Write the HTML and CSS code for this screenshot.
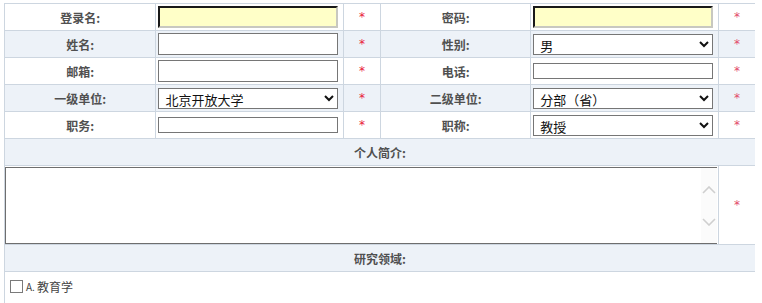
FILE: index.html
```html
<!DOCTYPE html>
<html lang="zh-CN">
<head>
  <meta charset="UTF-8" />
  <title>用户注册</title>
  <link rel="stylesheet" href="styles.css">
</head>
<body>
  <table class="form-table">
    <colgroup>
      <col class="c-label"><col class="c-field"><col class="c-star">
      <col class="c-label2"><col class="c-field"><col class="c-star">
    </colgroup>
    <tr>
      <th>登录名:</th>
      <td class="field"><input class="txt hl" type="text"></td>
      <td class="star">*</td>
      <th>密码:</th>
      <td class="field"><input class="txt hl" type="password"></td>
      <td class="star soft">*</td>
    </tr>
    <tr class="alt">
      <th>姓名:</th>
      <td class="field"><input class="txt" type="text"></td>
      <td class="star">*</td>
      <th>性别:</th>
      <td class="field"><select class="sel"><option>男</option><option>女</option></select></td>
      <td class="star soft">*</td>
    </tr>
    <tr>
      <th>邮箱:</th>
      <td class="field"><input class="txt" type="text"></td>
      <td class="star">*</td>
      <th>电话:</th>
      <td class="field"><input class="txt small" type="text"></td>
      <td class="star soft">*</td>
    </tr>
    <tr class="alt">
      <th>一级单位:</th>
      <td class="field"><select class="sel"><option>北京开放大学</option></select></td>
      <td class="star">*</td>
      <th>二级单位:</th>
      <td class="field"><select class="sel"><option>分部（省）</option></select></td>
      <td class="star soft">*</td>
    </tr>
    <tr>
      <th>职务:</th>
      <td class="field"><input class="txt small" type="text"></td>
      <td class="star">*</td>
      <th>职称:</th>
      <td class="field"><select class="sel"><option>教授</option><option>副教授</option></select></td>
      <td class="star soft">*</td>
    </tr>
    <tr class="alt">
      <th colspan="6">个人简介:</th>
    </tr>
    <tr class="intro">
      <td colspan="5" class="area-cell">
        <div class="area-wrap">
          <textarea class="area"></textarea>
          <div class="scroll-arrows">
            <svg width="14" height="8" viewBox="0 0 14 8"><path d="M1 7 L7 1 L13 7" fill="none" stroke="#cfcfcf" stroke-width="1.6"/></svg>
            <svg width="14" height="8" viewBox="0 0 14 8"><path d="M1 1 L7 7 L13 1" fill="none" stroke="#cfcfcf" stroke-width="1.6"/></svg>
          </div>
        </div>
      </td>
      <td class="star soft">*</td>
    </tr>
    <tr class="alt">
      <th colspan="6">研究领域:</th>
    </tr>
    <tr class="fields">
      <td colspan="6" class="check-cell">
        <label class="opt"><input type="checkbox"><span class="opt-key">A.</span> 教育学</label>
      </td>
    </tr>
  </table>
</body>
</html>
```

FILE: styles.css
```css
body {
  margin: 3px 7px 0 4px;
  background: #fff;
  font-family: "Noto Sans CJK SC", "DejaVu Sans", sans-serif;
  font-size: 12px;
  color: #333;
}
.form-table {
  border-collapse: collapse;
  table-layout: fixed;
  width: 752px;
}
.c-label { width: 151px; }
.c-field { width: 187px; }
.c-star { width: 37px; }
.c-label2 { width: 150px; }
.form-table th,
.form-table td {
  border: 1px solid #cdd6e0;
  height: 26px;
  padding: 0;
  vertical-align: middle;
}
.form-table th {
  font-weight: bold;
  color: #505050;
  text-align: center;
}
.alt {
  background: #edf2f8;
}
.field {
  padding-left: 2px !important;
  text-align: left;
}
.txt {
  box-sizing: border-box;
  display: block;
  width: 180px;
  height: 22px;
  margin: 0;
  padding: 0 3px;
  border: 1px solid #767676;
  background: #fff;
  font-size: 13px;
}
.txt.hl {
  background: #ffffc8;
  border: 2px inset #8a8a7a;
  border-color: #6e6e6e #c8c8c0 #c8c8c0 #6e6e6e;
}
.txt.small {
  height: 16px;
}
.sel {
  box-sizing: border-box;
  display: block;
  width: 180px;
  height: 21px;
  margin: 0;
  padding: 0 2px;
  border: 1px solid #767676;
  border-radius: 0;
  background: #fff;
  color: #111;
  font-family: "Noto Sans CJK SC", sans-serif;
  font-size: 13px;
}
.star {
  color: #e8203a;
  text-align: center;
  font-family: "DejaVu Sans", sans-serif;
  font-size: 12px;
}
.star.soft {
  color: #e24a6a;
}
.area-cell {
  height: 77px !important;
  vertical-align: top !important;
  padding-top: 1px !important;
}
.area-wrap {
  position: relative;
  width: 712px;
}
.area {
  box-sizing: border-box;
  display: block;
  width: 712px;
  height: 77px;
  margin: 0;
  border: 1px solid #6e6e6e;
  border-right: none;
  overflow: hidden;
  resize: none;
}
.scroll-arrows {
  position: absolute;
  top: 1px;
  right: 0;
  bottom: 1px;
  width: 16px;
  background: #fbfbfb;
  display: flex;
  flex-direction: column;
  justify-content: center;
  align-items: center;
  gap: 24px;
}
.check-cell {
  height: 40px !important;
  vertical-align: top !important;
  padding: 6px 0 0 4px !important;
}
.opt {
  display: flex;
  align-items: center;
  color: #444;
  font-size: 12px;
}
.opt input {
  appearance: none;
  width: 13px;
  height: 13px;
  margin: 0 3px 0 1px;
  border: 1px solid #7a7a7a;
  background: #fff;
}
.opt-key {
  font-size: 10px;
  margin-right: 2px;
}
```
